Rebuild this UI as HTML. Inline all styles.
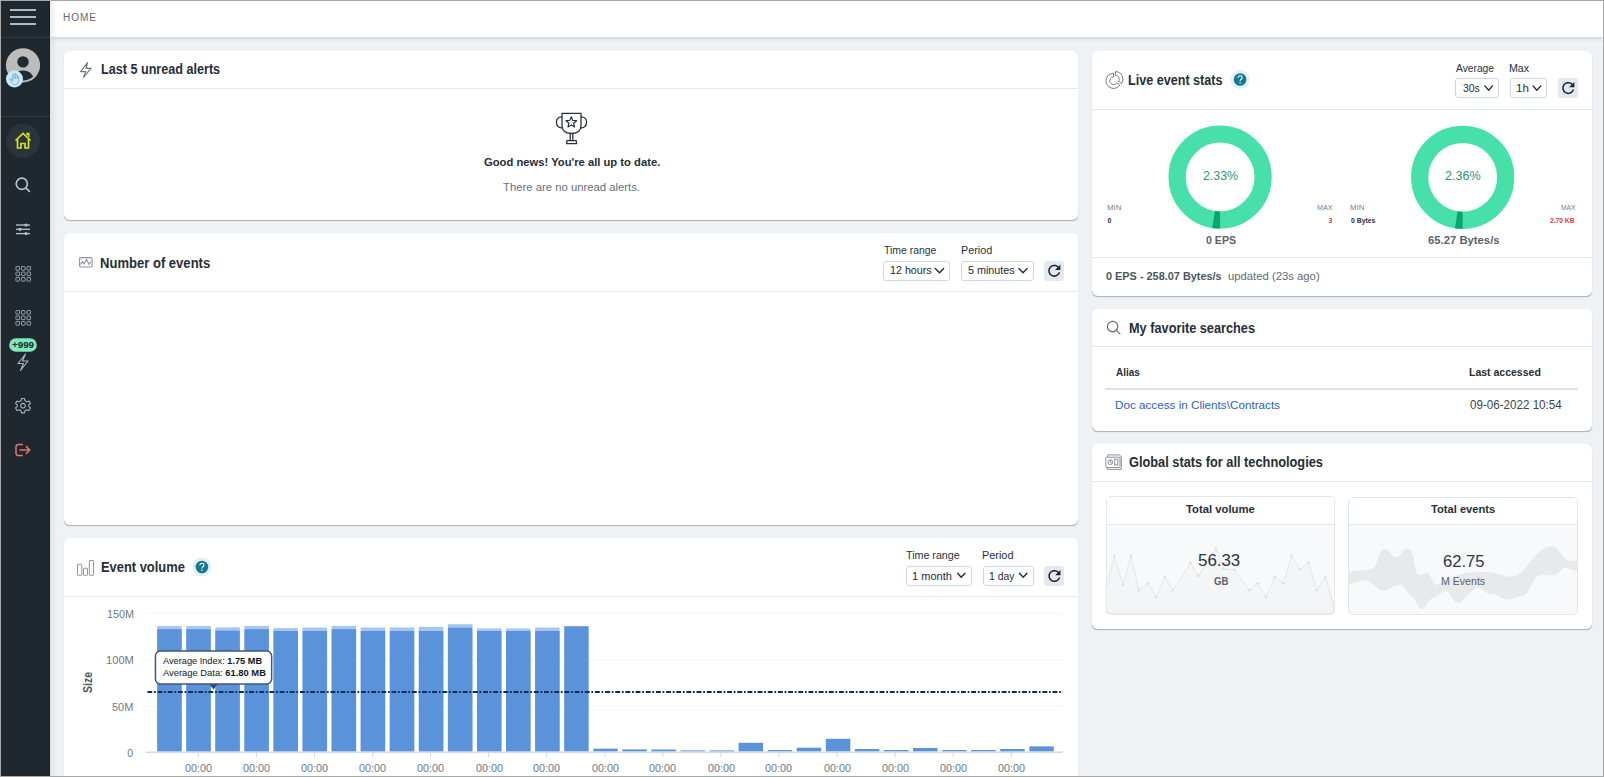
<!DOCTYPE html>
<html><head><meta charset="utf-8">
<style>
*{box-sizing:border-box;margin:0;padding:0}
html,body{width:1604px;height:777px;overflow:hidden}
body{font-family:"Liberation Sans",sans-serif;background:#eff2f5;position:relative;color:#1b2530}
#frame{position:absolute;left:0;top:0;width:1604px;height:777px;border:1px solid #a8a8a8;z-index:50}
#side{position:absolute;left:1px;top:1px;width:49px;height:776px;background:#1f272f;z-index:5;border-right:1px solid #161d24}
#hdr{position:absolute;left:50px;top:1px;width:1553px;height:36px;background:#fff;box-shadow:0 2px 4px rgba(60,70,80,.16);z-index:3}
#shade{position:absolute;left:50px;top:0;width:7px;height:777px;background:linear-gradient(to right,rgba(120,130,140,.14),rgba(120,130,140,0));z-index:4}
.ab{position:absolute}
.card{position:absolute;background:#fff;border-radius:6px;box-shadow:0 1.5px 1px -0.5px rgba(85,95,105,.45)}
.sep{position:absolute;left:0;right:0;height:1px;background:#e3e8ed}
.t{position:absolute;white-space:nowrap;line-height:1;z-index:10}
.sel{position:absolute;border:1px solid #cdd8e2;border-radius:3px;background:#fff;height:20px}
.rb{position:absolute;width:20px;height:20px;background:#e3e9ef;border-radius:3px}
svg{position:absolute;overflow:visible}
</style></head><body>
<div id="side">
<svg style="left:0;top:0" width="49" height="776" viewBox="1 1 49 776">
 <g stroke="#aebbc4" stroke-width="2" stroke-linecap="butt">
  <line x1="10" y1="10" x2="36" y2="10"/><line x1="10" y1="17" x2="36" y2="17"/><line x1="10" y1="24" x2="36" y2="24"/>
 </g>
 <line x1="1" y1="37.5" x2="50" y2="37.5" stroke="#313b44" stroke-width="1"/>
 <line x1="1" y1="116.5" x2="50" y2="116.5" stroke="#313b44" stroke-width="1"/>
 <circle cx="23" cy="65.3" r="17.1" fill="#bcbcbc"/>
 <clipPath id="avc"><circle cx="23" cy="65.3" r="15.2"/></clipPath>
 <circle cx="23" cy="61.9" r="5.7" fill="#1f2a31"/>
 <ellipse cx="23" cy="81.5" rx="11.5" ry="11" fill="#1f2a31" clip-path="url(#avc)"/>
 <circle cx="14.5" cy="79" r="8.5" fill="#c8ebfa"/>
 <path d="M9.6 78.9 Q10.5 77.9 11.4 79.1 L12.6 81 V75 Q13.3 73.6 14.1 75 V73.9 Q14.9 72.5 15.7 73.9 V74.8 Q16.5 73.6 17.3 75 V76.2 Q18 75.2 18.6 76.4 V81.2 Q18.3 84.6 15.4 84.8 Q13.2 84.7 12.2 83 Z M14.1 75 V79 M15.7 74.5 V79 M17.3 75.5 V79" stroke="#6ba3c9" stroke-width="0.75" fill="none" stroke-linejoin="round"/>
 <circle cx="23" cy="141" r="17" fill="#2b343c"/>
 <path d="M15.5 140.5 L23 133.5 L30.5 140.5 M17.5 138.8 V148 H21 V143.5 H25 V148 H28.5 V138.8" stroke="#d6e21c" stroke-width="1.7" fill="none" stroke-linejoin="miter"/>
 <path d="M27 135.5 V133.5 H28.8 V137.2" stroke="#d6e21c" stroke-width="1.5" fill="none"/>
 <circle cx="21.8" cy="183.8" r="5.6" stroke="#b7c3cb" stroke-width="1.7" fill="none"/>
 <line x1="25.8" y1="187.8" x2="29.8" y2="191.8" stroke="#b7c3cb" stroke-width="1.8"/>
 <g stroke="#b7c3cb" stroke-width="1.3">
  <line x1="16" y1="225" x2="30" y2="225"/><line x1="16" y1="229.3" x2="30" y2="229.3"/><line x1="16" y1="233.6" x2="30" y2="233.6"/>
 </g>
 <g fill="#b7c3cb"><circle cx="26" cy="225" r="1.6"/><circle cx="20" cy="229.3" r="1.6"/><circle cx="26" cy="233.6" r="1.6"/></g>
 <g stroke="#95a1a9" stroke-width="1" fill="none"><rect x="15.95" y="266.55" width="3.6" height="3.6" rx="0.5"/><rect x="21.45" y="266.55" width="3.6" height="3.6" rx="0.5"/><rect x="26.95" y="266.55" width="3.6" height="3.6" rx="0.5"/><rect x="15.95" y="272.05" width="3.6" height="3.6" rx="0.5"/><rect x="21.45" y="272.05" width="3.6" height="3.6" rx="0.5"/><rect x="26.95" y="272.05" width="3.6" height="3.6" rx="0.5"/><rect x="15.95" y="277.55" width="3.6" height="3.6" rx="0.5"/><rect x="21.45" y="277.55" width="3.6" height="3.6" rx="0.5"/><rect x="26.95" y="277.55" width="3.6" height="3.6" rx="0.5"/></g>
 <g transform="translate(0,44)" stroke="#95a1a9" stroke-width="1" fill="none"><rect x="15.95" y="266.55" width="3.6" height="3.6" rx="0.5"/><rect x="21.45" y="266.55" width="3.6" height="3.6" rx="0.5"/><rect x="26.95" y="266.55" width="3.6" height="3.6" rx="0.5"/><rect x="15.95" y="272.05" width="3.6" height="3.6" rx="0.5"/><rect x="21.45" y="272.05" width="3.6" height="3.6" rx="0.5"/><rect x="26.95" y="272.05" width="3.6" height="3.6" rx="0.5"/><rect x="15.95" y="277.55" width="3.6" height="3.6" rx="0.5"/><rect x="21.45" y="277.55" width="3.6" height="3.6" rx="0.5"/><rect x="26.95" y="277.55" width="3.6" height="3.6" rx="0.5"/></g>
 <rect x="9.2" y="338.2" width="27.6" height="13.6" rx="6.8" fill="#7fe8bf"/>
 <text x="23" y="348.2" font-size="9.6" font-weight="700" font-family="Liberation Sans" text-anchor="middle" fill="#14291f" textLength="22" lengthAdjust="spacingAndGlyphs">+999</text>
 <path d="M25.5 354 L18 363.5 H23.5 L20.5 370.5 L28 361 H22.5 Z" stroke="#aab6be" stroke-width="1.1" fill="none" stroke-linejoin="round"/>
 <g transform="translate(23,405.7) scale(0.9)">
  <path d="M-1.6 -8 H1.6 L2.2 -5.6 L4.4 -4.4 L6.7 -5.3 L8.3 -2.5 L6.4 -1 V1 L8.3 2.5 L6.7 5.3 L4.4 4.4 L2.2 5.6 L1.6 8 H-1.6 L-2.2 5.6 L-4.4 4.4 L-6.7 5.3 L-8.3 2.5 L-6.4 1 V-1 L-8.3 -2.5 L-6.7 -5.3 L-4.4 -4.4 L-2.2 -5.6 Z" stroke="#aab6be" stroke-width="1.2" fill="none" stroke-linejoin="round"/>
  <circle r="2.6" stroke="#aab6be" stroke-width="1.2" fill="none"/>
 </g>
 <path d="M22.3 444.4 H18.6 Q16 444.4 16 447 V453 Q16 455.6 18.6 455.6 H22.3 M20 450 H29.8 M26.4 446.6 L29.8 450 L26.4 453.4" stroke="#e27373" stroke-width="1.5" fill="none" stroke-linejoin="round" stroke-linecap="round"/>
</svg>
</div>
<div id="hdr"></div>
<div id="shade"></div>

<!-- LEFT CARDS -->
<div class="card" style="left:64px;top:51px;width:1014px;height:169px"><div class="sep" style="top:37px"></div></div>
<div class="card" style="left:64px;top:233px;width:1014px;height:292px"><div class="sep" style="top:58px"></div></div>
<div class="card" style="left:64px;top:538px;width:1014px;height:300px"><div class="sep" style="top:58px"></div></div>
<!-- RIGHT CARDS -->
<div class="card" style="left:1092px;top:51px;width:500px;height:245px"><div class="sep" style="top:58px"></div><div class="sep" style="top:206px"></div></div>
<div class="card" style="left:1092px;top:309px;width:500px;height:122px"><div class="sep" style="top:37px"></div></div>
<div class="card" style="left:1092px;top:444px;width:500px;height:185px"><div class="sep" style="top:37px"></div></div>

<!-- selects -->
<div class="sel" style="left:883px;top:261px;width:67px"></div>
<div class="sel" style="left:961px;top:261px;width:72.5px"></div>
<div class="rb" style="left:1044px;top:261px"></div>
<div class="sel" style="left:906px;top:565.5px;width:65.5px"></div>
<div class="sel" style="left:982.5px;top:565.5px;width:51px"></div>
<div class="rb" style="left:1044.3px;top:565.5px"></div>
<div class="sel" style="left:1455.3px;top:78.4px;width:44px"></div>
<div class="sel" style="left:1509.8px;top:78.4px;width:37.7px"></div>
<div class="rb" style="left:1558px;top:78.4px"></div>
<svg style="left:0;top:0;z-index:11" width="1604" height="777">
 <g stroke="#1e2731" stroke-width="1.3" fill="none" stroke-linecap="round" stroke-linejoin="round">
  <path d="M935.3 268.5 L939.5 272.8 L943.7 268.5"/>
  <path d="M1018.9 268.5 L1023 272.8 L1027.1 268.5"/>
  <path d="M957.6 573.3 L961.2 577.3 L965 573.3" />
  <path d="M1019.4 573.3 L1023.2 577.3 L1027 573.3"/>
  <path d="M1484.8 85.9 L1488.7 90.2 L1492.5 85.9"/>
  <path d="M1533 85.9 L1536.9 90.2 L1540.8 85.9"/>
 </g>
 <path transform="translate(1045.18 261.68) scale(0.76)" d="M17.65 6.35C16.2 4.9 14.21 4 12 4c-4.42 0-7.99 3.58-7.99 8s3.57 8 7.99 8c3.73 0 6.84-2.55 7.73-6h-2.08c-.82 2.33-3.04 4-5.65 4-3.31 0-6-2.69-6-6s2.69-6 6-6c1.66 0 3.14.69 4.22 1.78L13 11h7V4l-2.35 2.35z" fill="#1e2731"/>
 <path transform="translate(1045.28 566.88) scale(0.76)" d="M17.65 6.35C16.2 4.9 14.21 4 12 4c-4.42 0-7.99 3.58-7.99 8s3.57 8 7.99 8c3.73 0 6.84-2.55 7.73-6h-2.08c-.82 2.33-3.04 4-5.65 4-3.31 0-6-2.69-6-6s2.69-6 6-6c1.66 0 3.14.69 4.22 1.78L13 11h7V4l-2.35 2.35z" fill="#1e2731"/>
 <path transform="translate(1559.18 78.98) scale(0.76)" d="M17.65 6.35C16.2 4.9 14.21 4 12 4c-4.42 0-7.99 3.58-7.99 8s3.57 8 7.99 8c3.73 0 6.84-2.55 7.73-6h-2.08c-.82 2.33-3.04 4-5.65 4-3.31 0-6-2.69-6-6s2.69-6 6-6c1.66 0 3.14.69 4.22 1.78L13 11h7V4l-2.35 2.35z" fill="#1e2731"/>
</svg>

<!--ICONS-->
<svg style="left:0;top:0;z-index:9" width="1604" height="777">
 <!-- lightning card1 -->
 <path d="M87.6 62.6 L80.6 71.6 H85.6 L83.4 77.4 L91 68.4 H86 Z" stroke="#6b7680" stroke-width="1.1" fill="none" stroke-linejoin="round"/>
 <!-- trophy -->
 <g stroke="#2a3139" stroke-width="1.3" fill="none" stroke-linejoin="round">
  <path d="M562 113.3 H581 V125.5 Q581 133.3 571.5 133.5 Q562 133.3 562 125.5 Z"/>
  <path d="M562 116.8 Q556.3 117 556.4 122.3 Q556.6 127.8 562.3 128"/>
  <path d="M581 116.8 Q586.7 117 586.6 122.3 Q586.4 127.8 580.7 128"/>
  <path d="M570.2 133.6 V140.2 M572.8 133.6 V140.2"/>
  <path d="M567 140.6 H576.2 L576.6 143.6 H566.6 Z"/>
  <path d="M571.30 116.80 L572.77 120.38 L576.63 120.67 L573.68 123.17 L574.59 126.93 L571.30 124.90 L568.01 126.93 L568.92 123.17 L565.97 120.67 L569.83 120.38 Z" stroke-width="1.2"/>
 </g>
 <!-- number of events icon -->
 <g stroke="#8c959c" stroke-width="1.1" fill="none">
  <rect x="79.6" y="257.6" width="12.5" height="9.4" rx="1.2"/>
  <path d="M80.5 264.5 L82.5 261.5 L84 264 L86.5 259.5 L89 264.5 L91 261.5"/>
 </g>
 <!-- event volume icon -->
 <g stroke="#8c959c" stroke-width="1" fill="none">
  <rect x="77.5" y="564.3" width="4.3" height="11" rx="0.6"/>
  <rect x="83.5" y="568.3" width="4" height="7" rx="0.6"/>
  <rect x="89.3" y="560.5" width="4.3" height="14.8" rx="0.6"/>
 </g>
 <!-- help icons -->
 <g>
  <circle cx="201.9" cy="567" r="9.5" fill="#e3eff2"/>
  <circle cx="201.9" cy="567" r="6.3" fill="#137b8f"/>
  <path d="M199.9 565.3 Q199.9 563.3 201.9 563.3 Q203.9 563.3 203.9 565.2 Q203.9 566.5 202.4 567.1 Q201.9 567.4 201.9 568.5" stroke="#fff" stroke-width="1.1" fill="none"/>
  <circle cx="201.9" cy="570.3" r="0.7" fill="#fff"/>
 </g>
 <g transform="translate(1038.2 -487.5)">
  <circle cx="201.9" cy="567" r="9.5" fill="#e3eff2"/>
  <circle cx="201.9" cy="567" r="6.3" fill="#137b8f"/>
  <path d="M199.9 565.3 Q199.9 563.3 201.9 563.3 Q203.9 563.3 203.9 565.2 Q203.9 566.5 202.4 567.1 Q201.9 567.4 201.9 568.5" stroke="#fff" stroke-width="1.1" fill="none"/>
  <circle cx="201.9" cy="570.3" r="0.7" fill="#fff"/>
 </g>
 <!-- live stats icon -->
 <g stroke="#6f7b84" stroke-width="1" fill="none" stroke-linejoin="round">
  <path d="M1113.60 73.20 A7.6 7.6 0 1 0 1119.83 85.16 L1116.71 82.98 A3.8 3.8 0 1 1 1113.60 77.00 Z"/>
  <path d="M1115.40 71.60 A7.6 7.6 0 0 1 1121.63 83.56 L1118.51 81.38 A3.8 3.8 0 0 0 1115.40 75.40 Z"/>
 </g>
 <!-- search icon -->
 <g stroke="#5f6b74" stroke-width="1.2" fill="none">
  <circle cx="1112.6" cy="326.6" r="5.2"/>
  <line x1="1116.4" y1="330.4" x2="1120.2" y2="334.2"/>
 </g>
 <!-- global stats icon -->
 <g stroke="#8a939a" stroke-width="1" fill="none">
  <path d="M1107.8 457 V454.9 H1119.5 L1121.3 457 V469.2 H1120.3"/>
  <rect x="1105.8" y="457.2" width="14.2" height="10.3" rx="0.8"/>
  <path d="M1107.5 467.5 V469.4 H1121"/>
  <circle cx="1110.4" cy="462.2" r="2.4"/>
  <path d="M1110.4 459.8 V462.2 L1112.4 463.4"/>
  <rect x="1114.6" y="459.3" width="3.2" height="5.6"/>
 </g>
 <!-- donuts -->
 <g fill="none" stroke-width="17.2">
  <circle cx="1220.1" cy="177.0" r="43" stroke="#48e0a9"/>
  <circle cx="1462.7" cy="177.3" r="43" stroke="#48e0a9"/>
 </g>
 <path d="M1220.10 228.60 A51.6 51.6 0 0 1 1212.35 228.01 L1214.93 211.01 A34.4 34.4 0 0 0 1220.10 211.40 Z" fill="#0ba46c"/>
 <path d="M1462.70 228.90 A51.6 51.6 0 0 1 1454.95 228.31 L1457.53 211.31 A34.4 34.4 0 0 0 1462.70 211.70 Z" fill="#0ba46c"/>
</svg>
<!-- stat boxes -->
<div class="ab" style="left:1105.5px;top:496px;width:229.3px;height:118.5px;border:1px solid #dfe6ec;border-radius:5px;background:#f8f9fb;overflow:hidden">
 <div class="ab" style="left:0;top:0;right:0;height:28px;background:#fff;border-bottom:1px solid #e0e7ed"></div>
</div>
<div class="ab" style="left:1348.3px;top:496.5px;width:230.2px;height:118px;border:1px solid #dfe6ec;border-radius:5px;background:#f8f9fb;overflow:hidden">
 <div class="ab" style="left:0;top:0;right:0;height:27.5px;background:#fff;border-bottom:1px solid #e0e7ed"></div>
</div>
<svg style="left:0;top:0;z-index:6" width="1604" height="777">
 <path d="M1106.2 590.3 L1114.4 555.8 L1122.9 584.9 L1130.9 555.8 L1138.9 590.3 L1147.9 583.3 L1156.4 597.2 L1164.9 576.8 L1172.9 590.3 L1190.3 562.9 L1198.5 575.9 L1215.8 548.6 L1223.6 569.1 L1234.4 569.7 L1249.5 590.3 L1257.8 583.3 L1266 597.2 L1274.8 576.8 L1283.5 583.3 L1291.5 555.8 L1300 569.7 L1308.5 562.5 L1317 590.3 L1325.5 576.8 L1333.2 603.4 V613 H1106.2 Z" fill="#efefef" fill-opacity="0.45" stroke="#e6e6e6" stroke-width="1"/>
 <g fill="#dedede"><circle cx="1114.4" cy="555.8" r="1.3"/> <circle cx="1122.9" cy="584.9" r="1.3"/> <circle cx="1130.9" cy="555.8" r="1.3"/> <circle cx="1138.9" cy="590.3" r="1.3"/> <circle cx="1147.9" cy="583.3" r="1.3"/> <circle cx="1156.4" cy="597.2" r="1.3"/> <circle cx="1164.9" cy="576.8" r="1.3"/> <circle cx="1172.9" cy="590.3" r="1.3"/> <circle cx="1190.3" cy="562.9" r="1.3"/> <circle cx="1198.5" cy="575.9" r="1.3"/> <circle cx="1215.8" cy="548.6" r="1.3"/> <circle cx="1223.6" cy="569.1" r="1.3"/> <circle cx="1234.4" cy="569.7" r="1.3"/> <circle cx="1249.5" cy="590.3" r="1.3"/> <circle cx="1257.8" cy="583.3" r="1.3"/> <circle cx="1266" cy="597.2" r="1.3"/> <circle cx="1274.8" cy="576.8" r="1.3"/> <circle cx="1283.5" cy="583.3" r="1.3"/> <circle cx="1291.5" cy="555.8" r="1.3"/> <circle cx="1300" cy="569.7" r="1.3"/> <circle cx="1308.5" cy="562.5" r="1.3"/> <circle cx="1317" cy="590.3" r="1.3"/> <circle cx="1325.5" cy="576.8" r="1.3"/></g>
 <path d="M1348.7 571.7 C1358 570.5 1366 570.3 1372 569 C1378 567 1378 552 1383 549.5 C1389 547 1392 558 1397 557.5 C1402 556 1404 547 1409 548.5 C1415 551 1414 572 1418.5 575 C1423 577 1426 570 1429 574 C1432 578 1434 586 1437 585 L1444 582 C1452 578 1462 572 1472 572.5 C1480 572 1488 571.5 1495 573 C1505 576 1510 578 1516 576 C1524 572 1532 558 1540 551 C1546 546 1552 545 1557 549 C1561 553 1564 560 1569 560.5 C1573 561 1576 560.8 1578 560.9 L1578 571.7 C1572 571 1568 566 1563 568 C1558 573 1556 576 1553 575 C1545 575 1540 574 1536 577 C1530 586 1528 595 1522 596 C1515 597 1510 600 1505 599.5 C1498 597 1497 593 1493 594 C1488 596 1484 590 1479 587.5 C1474 587 1472 593 1468 594.5 C1464 597 1462 603 1458 603 C1452 602 1450 591 1446 591 C1440 592 1436 598 1433.8 598 C1428 598 1426 610 1421.7 609 C1417 608 1416 598 1413 597.7 C1408 595 1404 585 1400.8 584.7 C1394 584 1390 590 1383.4 590.8 C1377 591 1372 581 1366 580.3 C1360 580 1352 584 1348.7 584.7 Z" fill="#e6e7e8" fill-opacity="0.9"/>
</svg>

<div class="ab" style="left:1105.3px;top:388px;width:473px;height:2px;background:#d9e2ea"></div>
<!--/ICONS-->
<!--CHART-->
<svg style="left:0;top:0;z-index:8" width="1604" height="777">
<line x1="146" y1="613.2" x2="1063" y2="613.2" stroke="#f2f4f6" stroke-width="1"/>
<line x1="146" y1="660.1" x2="1063" y2="660.1" stroke="#f2f4f6" stroke-width="1"/>
<line x1="146" y1="706.4" x2="1063" y2="706.4" stroke="#f2f4f6" stroke-width="1"/>
<rect x="157.20" y="625.9" width="24.5" height="125.60" fill="#a6c6f0"/>
<rect x="157.20" y="629.2" width="24.5" height="122.30" fill="#5b93db"/>
<rect x="186.27" y="626" width="24.5" height="125.50" fill="#a6c6f0"/>
<rect x="186.27" y="629.2" width="24.5" height="122.30" fill="#5b93db"/>
<rect x="215.34" y="627.4" width="24.5" height="124.10" fill="#a6c6f0"/>
<rect x="215.34" y="630.7" width="24.5" height="120.80" fill="#5b93db"/>
<rect x="244.41" y="626" width="24.5" height="125.50" fill="#a6c6f0"/>
<rect x="244.41" y="629.2" width="24.5" height="122.30" fill="#5b93db"/>
<rect x="273.48" y="628.1" width="24.5" height="123.40" fill="#a6c6f0"/>
<rect x="273.48" y="631" width="24.5" height="120.50" fill="#5b93db"/>
<rect x="302.55" y="627.6" width="24.5" height="123.90" fill="#a6c6f0"/>
<rect x="302.55" y="631" width="24.5" height="120.50" fill="#5b93db"/>
<rect x="331.62" y="625.9" width="24.5" height="125.60" fill="#a6c6f0"/>
<rect x="331.62" y="629.2" width="24.5" height="122.30" fill="#5b93db"/>
<rect x="360.69" y="627.5" width="24.5" height="124.00" fill="#a6c6f0"/>
<rect x="360.69" y="631" width="24.5" height="120.50" fill="#5b93db"/>
<rect x="389.76" y="627.5" width="24.5" height="124.00" fill="#a6c6f0"/>
<rect x="389.76" y="631" width="24.5" height="120.50" fill="#5b93db"/>
<rect x="418.83" y="626.8" width="24.5" height="124.70" fill="#a6c6f0"/>
<rect x="418.83" y="631" width="24.5" height="120.50" fill="#5b93db"/>
<rect x="447.90" y="624.2" width="24.5" height="127.30" fill="#a6c6f0"/>
<rect x="447.90" y="627.7" width="24.5" height="123.80" fill="#5b93db"/>
<rect x="476.97" y="628.4" width="24.5" height="123.10" fill="#a6c6f0"/>
<rect x="476.97" y="631" width="24.5" height="120.50" fill="#5b93db"/>
<rect x="506.04" y="628.4" width="24.5" height="123.10" fill="#a6c6f0"/>
<rect x="506.04" y="631" width="24.5" height="120.50" fill="#5b93db"/>
<rect x="535.11" y="627.5" width="24.5" height="124.00" fill="#a6c6f0"/>
<rect x="535.11" y="631" width="24.5" height="120.50" fill="#5b93db"/>
<rect x="564.18" y="626.2" width="24.5" height="125.30" fill="#5b93db"/>
<rect x="593.25" y="748.7" width="24.5" height="2.80" fill="#5b93db"/>
<rect x="622.32" y="749.4" width="24.5" height="2.10" fill="#5b93db"/>
<rect x="651.39" y="749.5" width="24.5" height="2.00" fill="#5b93db"/>
<rect x="680.46" y="750.4" width="24.5" height="1.10" fill="#5b93db"/>
<rect x="709.53" y="750.4" width="24.5" height="1.10" fill="#5b93db"/>
<rect x="738.60" y="742.8" width="24.5" height="8.70" fill="#5b93db"/>
<rect x="767.67" y="750" width="24.5" height="1.50" fill="#5b93db"/>
<rect x="796.74" y="747.7" width="24.5" height="3.80" fill="#5b93db"/>
<rect x="825.81" y="738.8" width="24.5" height="12.70" fill="#5b93db"/>
<rect x="854.88" y="749" width="24.5" height="2.50" fill="#5b93db"/>
<rect x="883.95" y="750" width="24.5" height="1.50" fill="#5b93db"/>
<rect x="913.02" y="748" width="24.5" height="3.50" fill="#5b93db"/>
<rect x="942.09" y="750" width="24.5" height="1.50" fill="#5b93db"/>
<rect x="971.16" y="750" width="24.5" height="1.50" fill="#5b93db"/>
<rect x="1000.23" y="749" width="24.5" height="2.50" fill="#5b93db"/>
<rect x="1029.30" y="746.4" width="24.5" height="5.10" fill="#5b93db"/>
<line x1="146" y1="752.2" x2="1063" y2="752.2" stroke="#d3dae1" stroke-width="1.4"/>
<line x1="198.30" y1="752.5" x2="198.30" y2="757" stroke="#cdd5dc" stroke-width="1"/>
<line x1="256.37" y1="752.5" x2="256.37" y2="757" stroke="#cdd5dc" stroke-width="1"/>
<line x1="314.44" y1="752.5" x2="314.44" y2="757" stroke="#cdd5dc" stroke-width="1"/>
<line x1="372.51" y1="752.5" x2="372.51" y2="757" stroke="#cdd5dc" stroke-width="1"/>
<line x1="430.58" y1="752.5" x2="430.58" y2="757" stroke="#cdd5dc" stroke-width="1"/>
<line x1="488.65" y1="752.5" x2="488.65" y2="757" stroke="#cdd5dc" stroke-width="1"/>
<line x1="546.72" y1="752.5" x2="546.72" y2="757" stroke="#cdd5dc" stroke-width="1"/>
<line x1="604.79" y1="752.5" x2="604.79" y2="757" stroke="#cdd5dc" stroke-width="1"/>
<line x1="662.86" y1="752.5" x2="662.86" y2="757" stroke="#cdd5dc" stroke-width="1"/>
<line x1="720.93" y1="752.5" x2="720.93" y2="757" stroke="#cdd5dc" stroke-width="1"/>
<line x1="779.00" y1="752.5" x2="779.00" y2="757" stroke="#cdd5dc" stroke-width="1"/>
<line x1="837.07" y1="752.5" x2="837.07" y2="757" stroke="#cdd5dc" stroke-width="1"/>
<line x1="895.14" y1="752.5" x2="895.14" y2="757" stroke="#cdd5dc" stroke-width="1"/>
<line x1="953.21" y1="752.5" x2="953.21" y2="757" stroke="#cdd5dc" stroke-width="1"/>
<line x1="1011.28" y1="752.5" x2="1011.28" y2="757" stroke="#cdd5dc" stroke-width="1"/>
<line x1="146" y1="692" x2="1063" y2="692" stroke="#0e2c5b" stroke-width="2" stroke-dasharray="4.9 1.75 1.75 1.77" stroke-dashoffset="8.77"/>
<rect x="155.45" y="651.05" width="116.2" height="32.9" rx="5" fill="#fff" stroke="#3f5a77" stroke-width="1.5"/>
<path d="M209.4 684.2 L217.5 684.2 L213.45 689.4 Z" fill="#2d4968"/>
<text transform="translate(92.3 682.5) rotate(-90)" text-anchor="middle" font-family="Liberation Sans" font-size="12" font-weight="700" fill="#4b5661" textLength="21" lengthAdjust="spacingAndGlyphs">Size</text>
</svg>
<!--/CHART-->
<div class='t' id='t0' style='left:63.10px;top:12.70px;font-size:10.0px;font-weight:400;color:#5b6876;letter-spacing:0.933px;transform:scaleX(1.0000);transform-origin:0 0;'>HOME</div>
<div class='t' id='t1' style='left:101.06px;top:62.36px;font-size:14.0px;font-weight:700;color:#252e38;letter-spacing:0.000px;transform:scaleX(0.9006);transform-origin:0 0;'>Last 5 unread alerts</div>
<div class='t' id='t2' style='left:483.82px;top:156.58px;font-size:11.4px;font-weight:700;color:#262e36;letter-spacing:0.000px;transform:scaleX(0.9854);transform-origin:0 0;'>Good news! You're all up to date.</div>
<div class='t' id='t3' style='left:503.35px;top:182.16px;font-size:10.9px;font-weight:400;color:#66717c;letter-spacing:0.000px;transform:scaleX(1.0382);transform-origin:0 0;'>There are no unread alerts.</div>
<div class='t' id='t4' style='left:100.46px;top:255.56px;font-size:14.0px;font-weight:700;color:#252e38;letter-spacing:0.000px;transform:scaleX(0.9319);transform-origin:0 0;'>Number of events</div>
<div class='t' id='t5' style='left:883.88px;top:245.75px;font-size:10.3px;font-weight:400;color:#27323d;letter-spacing:0.000px;transform:scaleX(1.0121);transform-origin:0 0;'>Time range</div>
<div class='t' id='t6' style='left:960.58px;top:245.75px;font-size:10.3px;font-weight:400;color:#27323d;letter-spacing:0.000px;transform:scaleX(1.0507);transform-origin:0 0;'>Period</div>
<div class='t' id='t7' style='left:889.58px;top:266.15px;font-size:10.3px;font-weight:400;color:#1f2a35;letter-spacing:0.000px;transform:scaleX(1.0411);transform-origin:0 0;'>12 hours</div>
<div class='t' id='t8' style='left:967.88px;top:266.15px;font-size:10.3px;font-weight:400;color:#1f2a35;letter-spacing:0.000px;transform:scaleX(1.0458);transform-origin:0 0;'>5 minutes</div>
<div class='t' id='t9' style='left:100.76px;top:560.16px;font-size:14.0px;font-weight:700;color:#252e38;letter-spacing:0.000px;transform:scaleX(0.9207);transform-origin:0 0;'>Event volume</div>
<div class='t' id='t10' style='left:905.78px;top:550.75px;font-size:10.3px;font-weight:400;color:#27323d;letter-spacing:0.000px;transform:scaleX(1.0392);transform-origin:0 0;'>Time range</div>
<div class='t' id='t11' style='left:981.98px;top:550.75px;font-size:10.3px;font-weight:400;color:#27323d;letter-spacing:0.000px;transform:scaleX(1.0565);transform-origin:0 0;'>Period</div>
<div class='t' id='t12' style='left:912.18px;top:571.55px;font-size:10.3px;font-weight:400;color:#1f2a35;letter-spacing:0.000px;transform:scaleX(1.0727);transform-origin:0 0;'>1 month</div>
<div class='t' id='t13' style='left:989.38px;top:571.55px;font-size:10.3px;font-weight:400;color:#1f2a35;letter-spacing:0.000px;transform:scaleX(1.0090);transform-origin:0 0;'>1 day</div>
<div class='t' id='t14' style='left:1128.46px;top:72.76px;font-size:14.0px;font-weight:700;color:#252e38;letter-spacing:0.000px;transform:scaleX(0.8998);transform-origin:0 0;'>Live event stats</div>
<div class='t' id='t15' style='left:1456.39px;top:63.77px;font-size:10.2px;font-weight:400;color:#27323d;letter-spacing:0.000px;transform:scaleX(1.0058);transform-origin:0 0;'>Average</div>
<div class='t' id='t16' style='left:1508.99px;top:63.77px;font-size:10.2px;font-weight:400;color:#27323d;letter-spacing:0.000px;transform:scaleX(1.0457);transform-origin:0 0;'>Max</div>
<div class='t' id='t17' style='left:1463.28px;top:84.15px;font-size:10.3px;font-weight:400;color:#1f2a35;letter-spacing:0.000px;transform:scaleX(1.0140);transform-origin:0 0;'>30s</div>
<div class='t' id='t18' style='left:1516.48px;top:84.15px;font-size:10.3px;font-weight:400;color:#1f2a35;letter-spacing:0.000px;transform:scaleX(1.1235);transform-origin:0 0;'>1h</div>
<div class='t' id='t19' style='left:1202.67px;top:170.35px;font-size:12.2px;font-weight:400;color:#2b9479;letter-spacing:0.000px;transform:scaleX(1.0123);transform-origin:0 0;'>2.33%</div>
<div class='t' id='t20' style='left:1445.17px;top:170.35px;font-size:12.2px;font-weight:400;color:#2b9479;letter-spacing:0.000px;transform:scaleX(1.0310);transform-origin:0 0;'>2.36%</div>
<div class='t' id='t21' style='left:1205.86px;top:234.90px;font-size:10.6px;font-weight:700;color:#58636d;letter-spacing:0.000px;transform:scaleX(1.0009);transform-origin:0 0;'>0 EPS</div>
<div class='t' id='t22' style='left:1427.56px;top:234.90px;font-size:10.6px;font-weight:700;color:#58636d;letter-spacing:0.000px;transform:scaleX(1.0658);transform-origin:0 0;'>65.27 Bytes/s</div>
<div class='t' id='t23' style='left:1106.58px;top:204.38px;font-size:7px;font-weight:400;color:#6f7f8e;letter-spacing:0.000px;transform:scaleX(1.1205);transform-origin:0 0;'>MIN</div>
<div class='t' id='t24' style='left:1107.58px;top:217.28px;font-size:7px;font-weight:700;color:#2a2f52;letter-spacing:0.000px;transform:scaleX(1.0000);transform-origin:0 0;'>0</div>
<div class='t' id='t25' style='left:1317.48px;top:204.38px;font-size:7px;font-weight:400;color:#6f7f8e;letter-spacing:0.000px;transform:scaleX(1.0215);transform-origin:0 0;'>MAX</div>
<div class='t' id='t26' style='left:1328.38px;top:217.28px;font-size:7px;font-weight:700;color:#e8343a;letter-spacing:0.000px;transform:scaleX(1.0000);transform-origin:0 0;'>3</div>
<div class='t' id='t27' style='left:1349.88px;top:204.38px;font-size:7px;font-weight:400;color:#6f7f8e;letter-spacing:0.000px;transform:scaleX(1.1205);transform-origin:0 0;'>MIN</div>
<div class='t' id='t28' style='left:1350.59px;top:218.30px;font-size:6.9px;font-weight:700;color:#2a2f52;letter-spacing:0.000px;transform:scaleX(0.9924);transform-origin:0 0;'>0 Bytes</div>
<div class='t' id='t29' style='left:1560.88px;top:204.38px;font-size:7px;font-weight:400;color:#6f7f8e;letter-spacing:0.000px;transform:scaleX(0.9485);transform-origin:0 0;'>MAX</div>
<div class='t' id='t30' style='left:1550.39px;top:218.30px;font-size:6.9px;font-weight:700;color:#e8343a;letter-spacing:0.000px;transform:scaleX(0.9689);transform-origin:0 0;'>2.70 KB</div>
<div class='t' id='t31' style='left:1106.35px;top:270.96px;font-size:10.9px;font-weight:700;color:#4a555f;letter-spacing:0.000px;transform:scaleX(1.0001);transform-origin:0 0;'>0 EPS - 258.07 Bytes/s</div>
<div class='t' id='t32' style='left:1228.35px;top:270.96px;font-size:10.9px;font-weight:400;color:#5e6a75;letter-spacing:0.000px;transform:scaleX(1.0368);transform-origin:0 0;'>updated (23s ago)</div>
<div class='t' id='t33' style='left:1129.06px;top:320.76px;font-size:14.0px;font-weight:700;color:#252e38;letter-spacing:0.000px;transform:scaleX(0.9098);transform-origin:0 0;'>My favorite searches</div>
<div class='t' id='t34' style='left:1116.37px;top:367.32px;font-size:10.5px;font-weight:700;color:#262e36;letter-spacing:0.000px;transform:scaleX(0.9450);transform-origin:0 0;'>Alias</div>
<div class='t' id='t35' style='left:1469.17px;top:366.62px;font-size:10.5px;font-weight:700;color:#262e36;letter-spacing:0.000px;transform:scaleX(1.0002);transform-origin:0 0;'>Last accessed</div>
<div class='t' id='t36' style='left:1115.34px;top:399.74px;font-size:11.0px;font-weight:400;color:#2963b5;letter-spacing:0.000px;transform:scaleX(1.0624);transform-origin:0 0;'>Doc access in Clients\Contracts</div>
<div class='t' id='t37' style='left:1470.08px;top:398.68px;font-size:12.0px;font-weight:400;color:#3a4550;letter-spacing:0.000px;transform:scaleX(0.9682);transform-origin:0 0;'>09-06-2022 10:54</div>
<div class='t' id='t38' style='left:1129.36px;top:455.36px;font-size:14.0px;font-weight:700;color:#252e38;letter-spacing:0.000px;transform:scaleX(0.9133);transform-origin:0 0;'>Global stats for all technologies</div>
<div class='t' id='t39' style='left:1185.73px;top:503.91px;font-size:11.2px;font-weight:700;color:#262e36;letter-spacing:0.000px;transform:scaleX(1.0090);transform-origin:0 0;'>Total volume</div>
<div class='t' id='t40' style='left:1431.23px;top:504.31px;font-size:11.2px;font-weight:700;color:#262e36;letter-spacing:0.000px;transform:scaleX(0.9971);transform-origin:0 0;'>Total events</div>
<div class='t' id='t41' style='left:1198.22px;top:552.48px;font-size:16.4px;font-weight:400;color:#2a3744;letter-spacing:0.000px;transform:scaleX(1.0302);transform-origin:0 0;'>56.33</div>
<div class='t' id='t42' style='left:1442.82px;top:552.58px;font-size:16.4px;font-weight:400;color:#2a3744;letter-spacing:0.000px;transform:scaleX(1.0104);transform-origin:0 0;'>62.75</div>
<div class='t' id='t43' style='left:1213.86px;top:575.90px;font-size:10.6px;font-weight:700;color:#56626d;letter-spacing:0.000px;transform:scaleX(0.8986);transform-origin:0 0;'>GB</div>
<div class='t' id='t44' style='left:1440.80px;top:577.30px;font-size:10.0px;font-weight:400;color:#56626d;letter-spacing:0.000px;transform:scaleX(1.0589);transform-origin:0 0;'>M Events</div>
<div class='t' id='t45' style='left:107.38px;top:610.24px;font-size:10.4px;font-weight:400;color:#6d7987;letter-spacing:0.000px;transform:scaleX(1.0412);transform-origin:0 0;'>150M</div>
<div class='t' id='t46' style='left:105.78px;top:656.14px;font-size:10.4px;font-weight:400;color:#6d7987;letter-spacing:0.000px;transform:scaleX(1.0728);transform-origin:0 0;'>100M</div>
<div class='t' id='t47' style='left:112.38px;top:702.84px;font-size:10.4px;font-weight:400;color:#6d7987;letter-spacing:0.000px;transform:scaleX(1.0526);transform-origin:0 0;'>50M</div>
<div class='t' id='t48' style='left:127.18px;top:748.54px;font-size:10.4px;font-weight:400;color:#6d7987;letter-spacing:0.000px;transform:scaleX(1.0000);transform-origin:0 0;'>0</div>
<div class='t' id='t49' style='left:185.38px;top:764.04px;font-size:10.4px;font-weight:400;color:#6d7987;letter-spacing:0.000px;transform:scaleX(1.0414);transform-origin:0 0;'>00:00</div>
<div class='t' id='t50' style='left:242.87px;top:764.04px;font-size:10.4px;font-weight:400;color:#6d7987;letter-spacing:0.000px;transform:scaleX(1.0414);transform-origin:0 0;'>00:00</div>
<div class='t' id='t51' style='left:301.36px;top:764.04px;font-size:10.4px;font-weight:400;color:#6d7987;letter-spacing:0.000px;transform:scaleX(1.0414);transform-origin:0 0;'>00:00</div>
<div class='t' id='t52' style='left:358.85px;top:764.04px;font-size:10.4px;font-weight:400;color:#6d7987;letter-spacing:0.000px;transform:scaleX(1.0414);transform-origin:0 0;'>00:00</div>
<div class='t' id='t53' style='left:417.34px;top:764.04px;font-size:10.4px;font-weight:400;color:#6d7987;letter-spacing:0.000px;transform:scaleX(1.0385);transform-origin:0 0;'>00:00</div>
<div class='t' id='t54' style='left:475.83px;top:764.04px;font-size:10.4px;font-weight:400;color:#6d7987;letter-spacing:0.000px;transform:scaleX(1.0385);transform-origin:0 0;'>00:00</div>
<div class='t' id='t55' style='left:533.32px;top:764.04px;font-size:10.4px;font-weight:400;color:#6d7987;letter-spacing:0.000px;transform:scaleX(1.0385);transform-origin:0 0;'>00:00</div>
<div class='t' id='t56' style='left:591.81px;top:764.04px;font-size:10.4px;font-weight:400;color:#6d7987;letter-spacing:0.000px;transform:scaleX(1.0385);transform-origin:0 0;'>00:00</div>
<div class='t' id='t57' style='left:649.30px;top:764.04px;font-size:10.4px;font-weight:400;color:#6d7987;letter-spacing:0.000px;transform:scaleX(1.0385);transform-origin:0 0;'>00:00</div>
<div class='t' id='t58' style='left:707.79px;top:764.04px;font-size:10.4px;font-weight:400;color:#6d7987;letter-spacing:0.000px;transform:scaleX(1.0385);transform-origin:0 0;'>00:00</div>
<div class='t' id='t59' style='left:765.28px;top:764.04px;font-size:10.4px;font-weight:400;color:#6d7987;letter-spacing:0.000px;transform:scaleX(1.0385);transform-origin:0 0;'>00:00</div>
<div class='t' id='t60' style='left:823.77px;top:764.04px;font-size:10.4px;font-weight:400;color:#6d7987;letter-spacing:0.000px;transform:scaleX(1.0414);transform-origin:0 0;'>00:00</div>
<div class='t' id='t61' style='left:882.26px;top:764.04px;font-size:10.4px;font-weight:400;color:#6d7987;letter-spacing:0.000px;transform:scaleX(1.0414);transform-origin:0 0;'>00:00</div>
<div class='t' id='t62' style='left:939.75px;top:764.04px;font-size:10.4px;font-weight:400;color:#6d7987;letter-spacing:0.000px;transform:scaleX(1.0414);transform-origin:0 0;'>00:00</div>
<div class='t' id='t63' style='left:998.24px;top:764.04px;font-size:10.4px;font-weight:400;color:#6d7987;letter-spacing:0.000px;transform:scaleX(1.0414);transform-origin:0 0;'>00:00</div>
<div class='t' id='t64' style='left:162.66px;top:656.66px;font-size:9.0px;font-weight:400;color:#111820;letter-spacing:0.000px;transform:scaleX(1.0227);transform-origin:0 0;'>Average Index: <b>1.75 MB</b></div>
<div class='t' id='t65' style='left:162.66px;top:668.56px;font-size:9.0px;font-weight:400;color:#111820;letter-spacing:0.000px;transform:scaleX(1.0405);transform-origin:0 0;'>Average Data: <b>61.80 MB</b></div>
<div id="frame"></div>
</body></html>
